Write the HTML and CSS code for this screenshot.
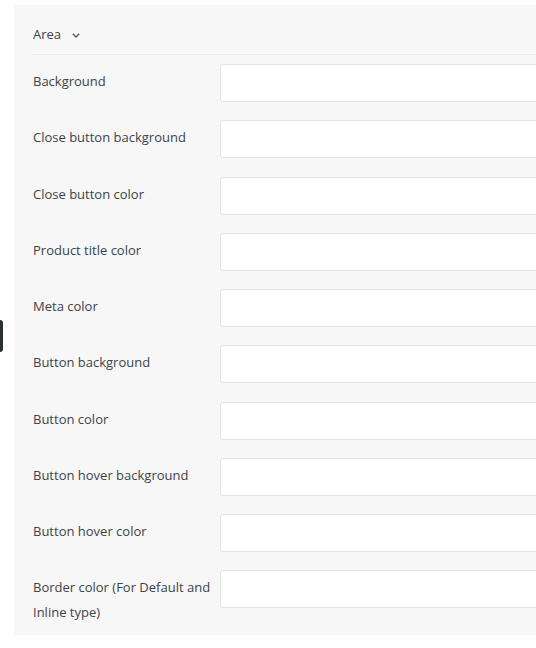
FILE: index.html
```html
<!DOCTYPE html>
<html>
<head>
<meta charset="utf-8">
<link rel="stylesheet" href="styles.css">
</head>
<body>
<div class="edge-tab"></div>
<div class="panel">
  <div class="panel-header">
    <span class="panel-title">Area</span>
    <svg class="chevron" width="8" height="5" viewBox="0 0 8 5"><path d="M0.8 0.8 L4 4 L7.2 0.8" fill="none" stroke="#50575e" stroke-width="1.3"/></svg>
  </div>
  <div class="fields">
    <label class="field-label">Background</label><div class="field-input"></div>
    <label class="field-label">Close button background</label><div class="field-input"></div>
    <label class="field-label">Close button color</label><div class="field-input"></div>
    <label class="field-label">Product title color</label><div class="field-input"></div>
    <label class="field-label">Meta color</label><div class="field-input"></div>
    <label class="field-label">Button background</label><div class="field-input"></div>
    <label class="field-label">Button color</label><div class="field-input"></div>
    <label class="field-label">Button hover background</label><div class="field-input"></div>
    <label class="field-label">Button hover color</label><div class="field-input"></div>
    <label class="field-label">Border color (For Default and Inline type)</label><div class="field-input"></div>
  </div>
</div>
</body>
</html>
```
FILE: styles.css
```css
html, body {
  margin: 0;
  padding: 0;
  background: #ffffff;
  overflow: hidden;
}
body {
  width: 536px;
  height: 648px;
  position: relative;
  font-family: "Open Sans", "Noto Sans", sans-serif;
  font-size: 13px;
  color: #3c434a;
}
.edge-tab {
  position: absolute;
  left: 0;
  top: 320px;
  width: 3px;
  height: 32px;
  background: #2c2f33;
  border-radius: 0 3px 3px 0;
}
.panel {
  margin: 5px 0 0 14px;
  width: 700px;
  background: #f7f7f7;
  padding: 0 0 10px 19px;
  box-sizing: border-box;
}
.panel-header {
  display: flex;
  align-items: center;
  gap: 11px;
  padding: 17px 0 7px;
  line-height: 25px;
  height: 25px;
  border-bottom: 1px solid #ececec;
  box-sizing: content-box;
}
.chevron { display: block; margin-top: 1px; }
.fields {
  display: grid;
  grid-template-columns: 187px 1fr;
  row-gap: 18.25px;
  padding-top: 9px;
}
.field-label {
  padding-top: 5px;
  line-height: 25px;
  padding-right: 6px;
}
.field-input {
  height: 38px;
  box-sizing: border-box;
  background: #ffffff;
  border: 1px solid #e4e4e4;
  border-radius: 3px;
}
```
